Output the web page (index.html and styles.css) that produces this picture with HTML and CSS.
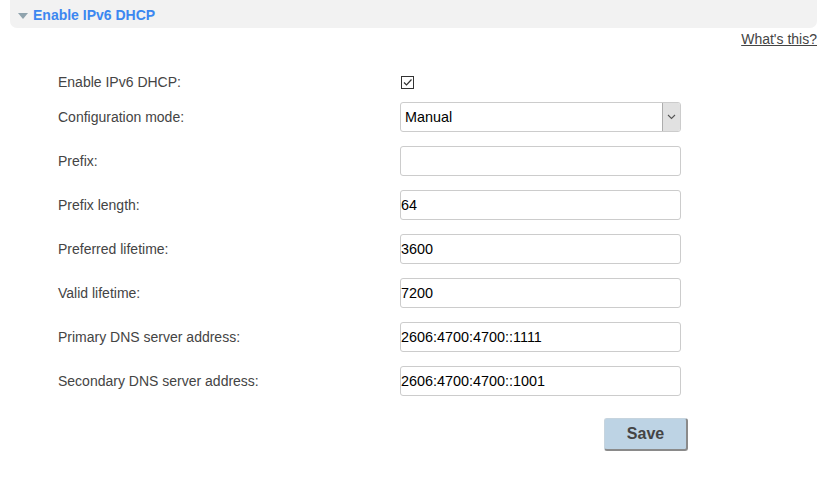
FILE: index.html
```html
<!DOCTYPE html>
<html>
<head>
<meta charset="utf-8">
<link rel="stylesheet" href="styles.css">
</head>
<body>
<div class="panel-head">
  <span class="tri"></span>
  <span class="panel-title">Enable IPv6 DHCP</span>
</div>
<div class="help-row"><a class="help" href="#">What's this?</a></div>
<div class="form">
  <div class="row row-check">
    <div class="label">Enable IPv6 DHCP:</div>
    <div class="ctrl"><span class="checkbox"><svg width="11" height="11" viewBox="0 0 11 11"><path d="M2 5.5 L4.5 8 L9.5 2.5" fill="none" stroke="#333" stroke-width="1.2"/></svg></span></div>
  </div>
  <div class="row row-select">
    <div class="label">Configuration mode:</div>
    <div class="ctrl">
      <div class="select"><span class="sel-text">Manual</span><span class="sel-btn"><svg width="9" height="6" viewBox="0 0 9 6"><path d="M1 1 L4.5 4.5 L8 1" fill="none" stroke="#555" stroke-width="1.1"/></svg></span></div>
    </div>
  </div>
  <div class="row">
    <div class="label">Prefix:</div>
    <div class="ctrl"><div class="input"></div></div>
  </div>
  <div class="row">
    <div class="label">Prefix length:</div>
    <div class="ctrl"><div class="input">64</div></div>
  </div>
  <div class="row">
    <div class="label">Preferred lifetime:</div>
    <div class="ctrl"><div class="input">3600</div></div>
  </div>
  <div class="row">
    <div class="label">Valid lifetime:</div>
    <div class="ctrl"><div class="input">7200</div></div>
  </div>
  <div class="row">
    <div class="label">Primary DNS server address:</div>
    <div class="ctrl"><div class="input">2606:4700:4700::1111</div></div>
  </div>
  <div class="row">
    <div class="label">Secondary DNS server address:</div>
    <div class="ctrl"><div class="input">2606:4700:4700::1001</div></div>
  </div>
  <div class="btn-row"><button class="save">Save</button></div>
</div>
</body>
</html>
```
FILE: styles.css
```css
html, body {
  margin: 0;
  padding: 0;
  background: #fff;
  font-family: "Liberation Sans", Arial, sans-serif;
  width: 830px;
  height: 499px;
  overflow: hidden;
}
.panel-head {
  margin: 0 13px 0 10px;
  height: 28px;
  background: #f2f2f2;
  border-radius: 0 0 7px 7px;
  display: flex;
  align-items: center;
  padding-left: 8px;
  box-sizing: border-box;
}
.tri {
  width: 0;
  height: 0;
  border-left: 5px solid transparent;
  border-right: 5px solid transparent;
  border-top: 6px solid #8fa3ad;
  margin-right: 5px;
  margin-top: 3px;
}
.panel-title {
  color: #3c87f0;
  font-weight: bold;
  font-size: 14px;
  margin-top: 1px;
}
.help-row {
  display: flex;
  justify-content: flex-end;
  margin: 3px 13px 0 0;
  height: 16px;
}
.help {
  color: #444;
  font-size: 14px;
  text-decoration: underline;
}
.form {
  padding-left: 58px;
  margin-top: 28px;
}
.row {
  display: flex;
  align-items: center;
  height: 30px;
  margin-bottom: 14px;
}
.row-check {
  height: 14px;
  margin-bottom: 13px;
}
.row-select {
  height: 30px;
  margin-bottom: 14px;
}
.label {
  width: 342px;
  font-size: 14px;
  color: #444;
}
.ctrl {
  width: 281px;
}
.checkbox {
  display: flex;
  align-items: center;
  justify-content: center;
  width: 11px;
  height: 11px;
  border: 1px solid #333;
  margin-left: 1px;
  background: #fff;
}
.select {
  height: 30px;
  border: 1px solid #ccc;
  border-radius: 3px;
  box-sizing: border-box;
  display: flex;
  align-items: center;
  justify-content: space-between;
  background: #fff;
}
.sel-text {
  font-size: 14.4px;
  color: #000;
  padding-left: 4px;
}
.sel-btn {
  width: 18px;
  height: 28px;
  background: #e1e1e1;
  border-left: 1px solid #adadad;
  display: flex;
  align-items: center;
  justify-content: center;
  box-sizing: border-box;
  border-radius: 0 2px 2px 0;
}
.input {
  height: 30px;
  border: 1px solid #ccc;
  border-radius: 3px;
  box-sizing: border-box;
  font-size: 14.4px;
  color: #000;
  display: flex;
  align-items: center;
  padding-left: 0;
  background: #fff;
}
.btn-row {
  padding-left: 546px;
  margin-top: 22px;
}
.save {
  width: 84px;
  height: 33px;
  background: #bdd3e4;
  border: 1px solid #c6d4de;
  border-right: 2px solid #8a8a8a;
  border-bottom: 2px solid #8a8a8a;
  border-radius: 3px;
  font-family: "Liberation Sans", Arial, sans-serif;
  font-weight: bold;
  font-size: 16px;
  color: #444;
  padding: 0;
}
```
